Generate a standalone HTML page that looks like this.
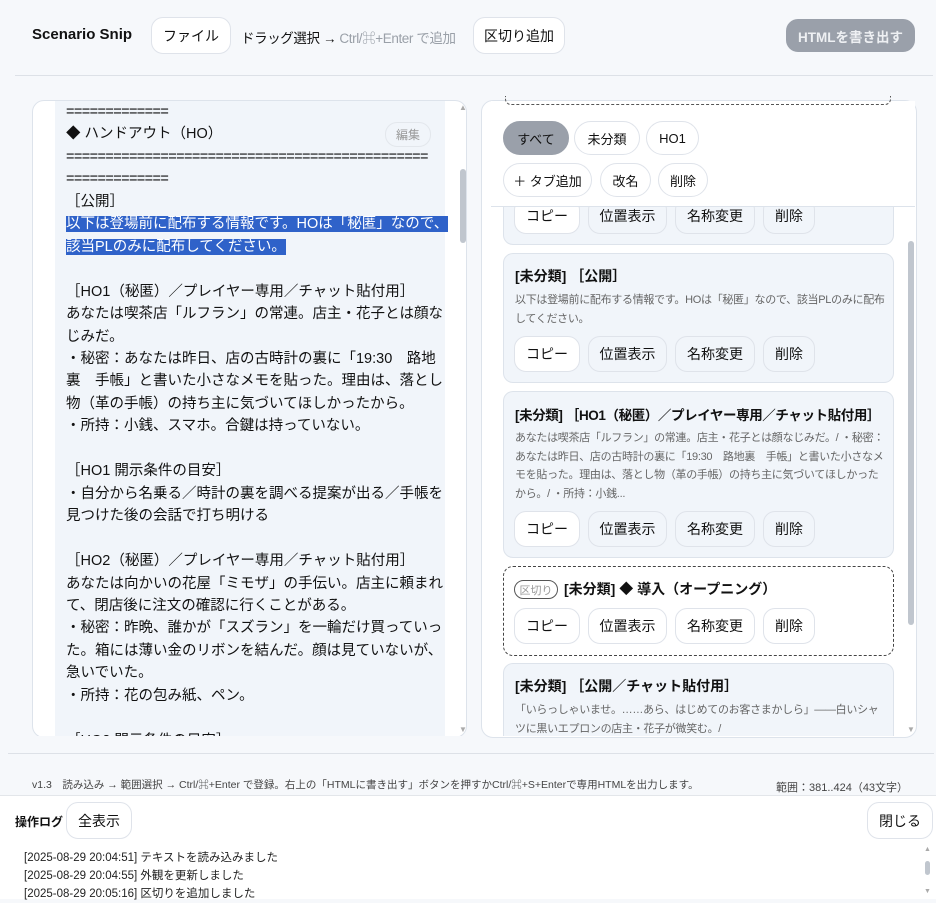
<!DOCTYPE html>
<html><head><meta charset="utf-8"><style>
*{box-sizing:border-box;margin:0;padding:0}
body{width:936px;height:899px;overflow:hidden;background:#f6f8fb;font-family:"Liberation Sans","Noto Sans CJK JP",sans-serif;color:#111;position:relative}
.a{position:absolute}
.btn{position:absolute;background:#fff;border:1px solid #dfe3ea;border-radius:12px;font-size:14px;display:flex;align-items:center;justify-content:center;color:#111}
.pill{position:absolute;background:#fff;border:1px solid #dfe3ea;border-radius:17px;font-size:13px;display:flex;align-items:center;justify-content:center;height:34px;top:0}
.card{position:absolute;left:503px;width:391px;background:#f1f5fa;border:1px solid #dde3eb;border-radius:10px}
.card .t{position:absolute;left:11px;top:12px;font-size:14px;font-weight:bold;white-space:nowrap}
.card .d{position:absolute;left:11px;top:37px;width:370px;font-size:11px;letter-spacing:-0.3px;line-height:18.5px;color:#666}
.cb{position:absolute;height:36px;border:1px solid #dfe3ea;border-radius:12px;background:#f1f5fa;font-size:14px;display:flex;align-items:center;justify-content:center}
.cb.w{background:#fff}
.txt{position:absolute;left:66px;top:101px;width:380px;font-size:14.5px;line-height:22.45px;white-space:pre;color:#111}
.eq{letter-spacing:-0.6px}
.hl{background:#2f62c9;color:#fff}
</style></head><body>
<div class="a" style="left:32px;top:26px;font-size:15px;font-weight:bold">Scenario Snip</div>
<div class="btn" style="left:151px;top:17px;width:80px;height:37px">ファイル</div>
<div class="a" style="left:241px;top:27px;font-size:13.5px;letter-spacing:-0.4px;white-space:nowrap">ドラッグ選択 → <span style="color:#9aa0a8">Ctrl/⌘+Enter で追加</span></div>
<div class="btn" style="left:473px;top:17px;width:92px;height:37px">区切り追加</div>
<div class="btn" style="left:786px;top:19px;width:129px;height:33px;background:#9aa0aa;border-color:#9aa0aa;color:#eef0f3;font-weight:bold;font-size:13.5px">HTMLを書き出す</div>
<div class="a" style="left:15px;top:75px;width:918px;height:1px;background:#dde1e7"></div>

<div class="a" style="left:32px;top:100px;width:435px;height:638px;background:#fff;border:1px solid #dde3eb;border-radius:12px;overflow:hidden">
<div class="a" style="left:22px;top:0;width:390px;height:638px;background:#f1f5fa"></div>
<div class="a" style="left:427px;top:68px;width:6px;height:74px;background:#c0c6ce;border-radius:3px"></div>
<div class="a" style="left:426px;top:2px;font-size:8px;color:#aaa">▲</div>
<div class="a" style="left:426px;top:624px;font-size:8px;color:#aaa">▼</div>
</div>
<div class="txt"><span class="eq">=============</span>
◆ ハンドアウト（HO）
<span class="eq">==============================================</span>
<span class="eq">=============</span>
［公開］
<span class="hl">以下は登場前に配布する情報です。HOは「秘匿」なので、</span>
<span class="hl">該当PLのみに配布してください。</span>

［HO1（秘匿）／プレイヤー専用／チャット貼付用］
あなたは喫茶店「ルフラン」の常連。店主・花子とは顔な
じみだ。
・秘密：あなたは昨日、店の古時計の裏に「19:30　路地
裏　手帳」と書いた小さなメモを貼った。理由は、落とし
物（革の手帳）の持ち主に気づいてほしかったから。
・所持：小銭、スマホ。合鍵は持っていない。

［HO1 開示条件の目安］
・自分から名乗る／時計の裏を調べる提案が出る／手帳を
見つけた後の会話で打ち明ける

［HO2（秘匿）／プレイヤー専用／チャット貼付用］
あなたは向かいの花屋「ミモザ」の手伝い。店主に頼まれ
て、閉店後に注文の確認に行くことがある。
・秘密：昨晩、誰かが「スズラン」を一輪だけ買っていっ
た。箱には薄い金のリボンを結んだ。顔は見ていないが、
急いでいた。
・所持：花の包み紙、ペン。

［HO2 開示条件の目安］</div>
<div class="a" style="left:32px;top:736px;width:435px;height:20px;background:#f6f8fb"></div>
<div class="btn" style="left:385px;top:122px;width:46px;height:25px;font-size:12px;color:#999;background:#f1f5fa;border-color:#e3e7ec">編集</div>

<div class="a" style="left:481px;top:100px;width:436px;height:638px;background:#fff;border:1px solid #dde3eb;border-radius:12px;overflow:hidden">
<div class="a" style="left:426px;top:140px;width:6px;height:384px;background:#c0c6ce;border-radius:3px"></div>
<div class="a" style="left:425px;top:2px;font-size:8px;color:#aaa">▲</div>
<div class="a" style="left:425px;top:624px;font-size:8px;color:#aaa">▼</div>
</div>

<div class="card" style="top:180px;height:65px">
<div class="cb w" style="left:10px;top:17px;width:66px">コピー</div>
<div class="cb" style="left:84px;top:17px;width:79px">位置表示</div>
<div class="cb" style="left:171px;top:17px;width:80px">名称変更</div>
<div class="cb" style="left:259px;top:17px;width:52px">削除</div>
</div>
<div class="a" style="left:491px;top:101px;width:424px;height:106px;background:#fff;border-bottom:1px solid #dde3eb"></div>
<div class="a" style="left:505px;top:96px;width:386px;height:9px;border:1px dashed #555;border-top:none;border-radius:0 0 6px 6px"></div>
<div class="a" style="left:503px;top:121px;width:400px;height:34px">
<div class="pill" style="left:0;width:66px;background:#9aa0aa;border-color:#9aa0aa">すべて</div>
<div class="pill" style="left:71px;width:66px">未分類</div>
<div class="pill" style="left:143px;width:53px">HO1</div>
</div>
<div class="a" style="left:503px;top:163px;width:400px;height:34px">
<div class="pill" style="left:0;width:89px">＋ タブ追加</div>
<div class="pill" style="left:97px;width:51px">改名</div>
<div class="pill" style="left:155px;width:50px">削除</div>
</div>

<div class="card" style="top:253px;height:130px">
<div class="t">[未分類] ［公開］</div>
<div class="d">以下は登場前に配布する情報です。HOは「秘匿」なので、該当PLのみに配布してください。</div>
<div class="cb w" style="left:10px;top:82px;width:66px">コピー</div>
<div class="cb" style="left:84px;top:82px;width:79px">位置表示</div>
<div class="cb" style="left:171px;top:82px;width:80px">名称変更</div>
<div class="cb" style="left:259px;top:82px;width:52px">削除</div>
</div>

<div class="card" style="top:391px;height:167px">
<div class="t" style="font-size:13.5px;letter-spacing:-0.4px">[未分類] ［HO1（秘匿）／プレイヤー専用／チャット貼付用］</div>
<div class="d">あなたは喫茶店「ルフラン」の常連。店主・花子とは顔なじみだ。/ ・秘密：あなたは昨日、店の古時計の裏に「19:30　路地裏　手帳」と書いた小さなメモを貼った。理由は、落とし物（革の手帳）の持ち主に気づいてほしかったから。/ ・所持：小銭...</div>
<div class="cb w" style="left:10px;top:119px;width:66px">コピー</div>
<div class="cb" style="left:84px;top:119px;width:79px">位置表示</div>
<div class="cb" style="left:171px;top:119px;width:80px">名称変更</div>
<div class="cb" style="left:259px;top:119px;width:52px">削除</div>
</div>

<div class="card" style="top:566px;height:90px;background:#fff;border:1px dashed #444">
<div class="a" style="left:10px;top:13px;width:44px;height:19px;border:1px solid #555;border-radius:10px;font-size:11px;color:#999;display:flex;align-items:center;justify-content:center">区切り</div>
<div class="t" style="left:60px">[未分類] ◆ 導入（オープニング）</div>
<div class="cb w" style="left:10px;top:41px;width:66px">コピー</div>
<div class="cb w" style="left:84px;top:41px;width:79px">位置表示</div>
<div class="cb w" style="left:171px;top:41px;width:80px">名称変更</div>
<div class="cb w" style="left:259px;top:41px;width:52px">削除</div>
</div>

<div class="card" style="top:663px;height:73px;border-bottom:none;border-radius:10px 10px 0 0;overflow:hidden">
<div class="t">[未分類] ［公開／チャット貼付用］</div>
<div class="d">「いらっしゃいませ。……あら、はじめてのお客さまかしら」――白いシャツに黒いエプロンの店主・花子が微笑む。/</div>
</div>

<div class="a" style="left:8px;top:753px;width:926px;height:1px;background:#dde1e7"></div>
<div class="a" style="left:32px;top:777px;font-size:10.5px;color:#444;white-space:nowrap">v1.3　読み込み → 範囲選択 → Ctrl/⌘+Enter で登録。右上の「HTMLに書き出す」ボタンを押すかCtrl/⌘+S+Enterで専用HTMLを出力します。</div>
<div class="a" style="left:776px;top:779px;font-size:11px;color:#444;white-space:nowrap">範囲：381..424（43文字）</div>
<div class="a" style="left:0;top:795px;width:936px;height:104px;background:#fff;border-top:1px solid #e3e6ea"></div>
<div class="a" style="left:15px;top:813px;font-size:12px;font-weight:bold">操作ログ</div>
<div class="btn" style="left:66px;top:802px;width:66px;height:37px">全表示</div>
<div class="btn" style="left:867px;top:802px;width:66px;height:37px">閉じる</div>
<div class="a" style="left:24px;top:849px;font-size:11.5px;line-height:18px;color:#222;white-space:nowrap">[2025-08-29 20:04:51] テキストを読み込みました<br>[2025-08-29 20:04:55] 外観を更新しました<br>[2025-08-29 20:05:16] 区切りを追加しました</div>
<div class="a" style="left:924px;top:846px;font-size:7px;color:#aaa">▲</div>
<div class="a" style="left:925px;top:861px;width:5px;height:14px;background:#c0c6ce;border-radius:3px"></div>
<div class="a" style="left:924px;top:888px;font-size:7px;color:#aaa">▼</div>
</body></html>
